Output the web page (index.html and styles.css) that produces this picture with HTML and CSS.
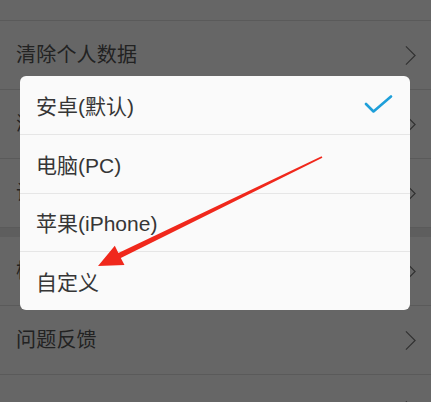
FILE: index.html
```html
<!DOCTYPE html>
<html lang="zh-CN">
<head>
<meta charset="utf-8">
<title>浏览器标识</title>
<link rel="stylesheet" href="styles.css">
</head>
<body>
<div class="page">
  <div class="list">
    <div class="row row-partial"></div>
    <div class="row"><span class="label">清除个人数据</span><svg class="chev" viewBox="0 0 12 22"><polyline points="1,1 11,11 1,21"/></svg></div>
    <div class="row"><span class="label">浏览器标识(UA)</span><svg class="chev" viewBox="0 0 12 22"><polyline points="1,1 11,11 1,21"/></svg></div>
    <div class="row"><span class="label">设置默认浏览器</span><svg class="chev" viewBox="0 0 12 22"><polyline points="1,1 11,11 1,21"/></svg></div>
  </div>
  <div class="gap"></div>
  <div class="list">
    <div class="row"><span class="label">检查更新</span><svg class="chev" viewBox="0 0 12 22"><polyline points="1,1 11,11 1,21"/></svg></div>
    <div class="row"><span class="label">问题反馈</span><svg class="chev" viewBox="0 0 12 22"><polyline points="1,1 11,11 1,21"/></svg></div>
    <div class="row row-last"><span class="label">隐私政策与用户服务协议</span><svg class="chev" viewBox="0 0 12 22"><polyline points="1,1 11,11 1,21"/></svg></div>
  </div>

  <div class="overlay"></div>

  <div class="dialog">
    <div class="option"><span>安卓(默认)</span><svg class="check" viewBox="0 0 30 20"><polyline points="2,9 9.5,16.5 27,1.5"/></svg></div>
    <div class="option"><span>电脑(PC)</span></div>
    <div class="option"><span>苹果(iPhone)</span></div>
    <div class="option"><span>自定义</span></div>
  </div>

  <svg class="arrow" viewBox="0 0 431 402" width="431" height="402">
    <polygon points="322.4,157.7 120.8,258.0 124.5,265.0 98,266 114.8,245.8 118.4,253.0 321.6,156.3"/>
  </svg>
</div>
</body>
</html>
```

FILE: styles.css
```css
* { box-sizing: border-box; }

html, body {
  margin: 0;
  padding: 0;
}

body {
  width: 431px;
  height: 402px;
  overflow: hidden;
  background: #ffffff;
  font-family: "Liberation Sans", "Noto Sans CJK SC", sans-serif;
}

.page {
  position: relative;
  width: 431px;
  height: 402px;
  overflow: hidden;
  background: #ffffff;
}

.list {
  display: flex;
  flex-direction: column;
}

.row {
  display: flex;
  flex-shrink: 0;
  align-items: center;
  justify-content: space-between;
  height: 69px;
  padding: 0 15px 0 16px;
  border-bottom: 1px solid #e2e2e2;
  background: #ffffff;
}

.row-partial {
  height: 21px;
}

.row-last {
  align-items: flex-start;
  padding-top: 31px;
}

.label {
  font-size: 20px;
  line-height: 28px;
  color: #555555;
  letter-spacing: 0.2px;
}

.chev {
  width: 11px;
  height: 21px;
  fill: none;
  stroke: #7a7a7a;
  stroke-width: 1.3;
}

.row-last .chev {
  margin-top: -6px;
}

.gap {
  height: 9px;
  background: #ececec;
}

.overlay {
  position: absolute;
  inset: 0;
  background: rgba(0, 0, 0, 0.6);
}

.dialog {
  position: absolute;
  left: 20px;
  top: 76px;
  width: 390px;
  height: 234px;
  background: #fafafa;
  border-radius: 6px;
  display: flex;
  flex-direction: column;
  overflow: hidden;
}

.option {
  flex: 1;
  display: flex;
  align-items: center;
  justify-content: space-between;
  padding: 0 16px 0 16px;
  border-bottom: 1px solid #e6e6e6;
  font-size: 21px;
  color: #363636;
}

.option:last-child {
  border-bottom: none;
}

.check {
  width: 30px;
  height: 20px;
  fill: none;
  stroke: #1e9fd9;
  stroke-width: 2.6;
  stroke-linecap: round;
  stroke-linejoin: round;
}

.arrow {
  position: absolute;
  left: 0;
  top: 0;
  fill: #f0281c;
}
```
